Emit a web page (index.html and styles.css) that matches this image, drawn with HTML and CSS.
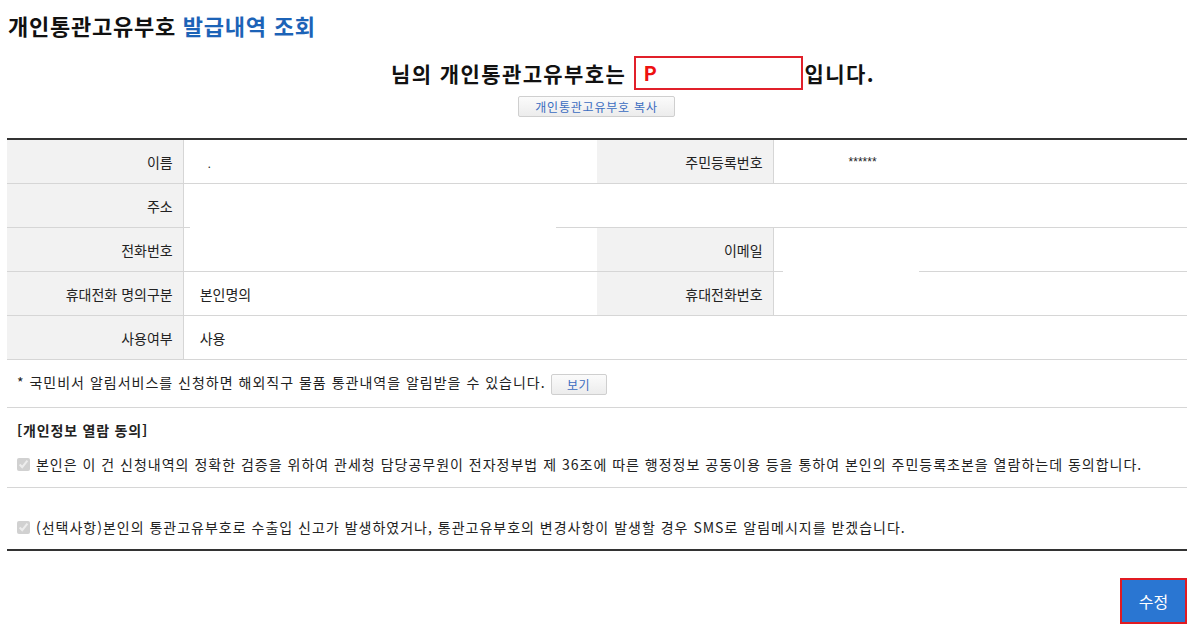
FILE: index.html
```html
<!DOCTYPE html>
<html lang="ko">
<head>
    <meta charset="UTF-8">
    <meta name="viewport" content="width=device-width, initial-scale=1.0">
    <title>개인통관고유부호 발급내역 조회</title>
    <link rel="stylesheet" href="styles.css">
</head>
<body>
    <div class="container">
        <h1 class="title">개인통관고유부호 <span class="blue">발급내역 조회</span></h1>

        <div class="result">
            <p class="result-line"><span class="user-name"></span>님의 개인통관고유부호는 <span class="code-box">P</span>입니다.</p>
            <button class="btn-copy">개인통관고유부호 복사</button>
        </div>

        <table class="info-table">
            <tr>
                <th>이름</th>
                <td><span class="dot">.</span></td>
                <th>주민등록번호</th>
                <td><span class="masked">******</span></td>
            </tr>
            <tr>
                <th>주소</th>
                <td colspan="3" class="has-mask"><span class="mask mask-addr"></span></td>
            </tr>
            <tr>
                <th>전화번호</th>
                <td></td>
                <th>이메일</th>
                <td class="has-mask"><span class="mask mask-mail"></span></td>
            </tr>
            <tr>
                <th>휴대전화 명의구분</th>
                <td>본인명의</td>
                <th>휴대전화번호</th>
                <td></td>
            </tr>
            <tr>
                <th>사용여부</th>
                <td colspan="3">사용</td>
            </tr>
        </table>

        <div class="agree-box">
            <div class="notice">
                * 국민비서 알림서비스를 신청하면 해외직구 물품 통관내역을 알림받을 수 있습니다.
                <button class="btn-view">보기</button>
            </div>
            <div class="agree-section">
                <h3>[개인정보 열람 동의]</h3>
                <label class="check-row">
                    <input type="checkbox" checked disabled>
                    본인은 이 건 신청내역의 정확한 검증을 위하여 관세청 담당공무원이 전자정부법 제 36조에 따른 행정정보 공동이용 등을 통하여 본인의 주민등록초본을 열람하는데 동의합니다.
                </label>
            </div>
            <div class="agree-section optional">
                <label class="check-row">
                    <input type="checkbox" checked disabled>
                    (선택사항)본인의 통관고유부호로 수출입 신고가 발생하였거나, 통관고유부호의 변경사항이 발생할 경우 SMS로 알림메시지를 받겠습니다.
                </label>
            </div>
        </div>

        <div class="actions">
            <button class="btn-edit">수정</button>
        </div>
    </div>
</body>
</html>
```

FILE: styles.css
```css
body {
    font-family: "Noto Sans CJK KR", "Noto Sans", sans-serif;
    font-size: 14px;
    color: #222;
    background-color: #fff;
    margin: 0;
}

.container {
    width: 1180px;
    margin-left: 7px;
}

.title {
    font-size: 22px;
    font-weight: bold;
    color: #111;
    margin: 0;
    padding: 9px 0 0 1px;
    height: 40px;
    line-height: 32px;
    letter-spacing: 0.75px;
}

.title .blue {
    color: #1c63b7;
}

.result {
    text-align: center;
}

.result-line {
    margin: 0;
    padding-top: 7px;
    font-size: 21px;
    font-weight: bold;
    color: #111;
    line-height: 34px;
    letter-spacing: 1.4px;
}

/* 이름은 가려져 있음 */
.user-name {
    display: inline-block;
    width: 72px;
}

.code-box {
    display: inline-block;
    width: 157px;
    height: 30px;
    line-height: 30px;
    border: 2px solid #e1202a;
    padding-left: 8px;
    margin-right: 2px;
    text-align: left;
    color: #ee1111;
    font-size: 20px;
    letter-spacing: 0;
    vertical-align: top;
}

.btn-copy {
    display: block;
    margin: 6px auto 0 511px;
    width: 157px;
    height: 21px;
    padding: 0;
    font-family: inherit;
    font-size: 12px;
    letter-spacing: 0.8px;
    color: #3a6cc0;
    background: linear-gradient(#fbfbfb, #ececec);
    border: 1px solid #cfcfcf;
    border-radius: 2px;
    line-height: 18px;
}

.info-table {
    width: 100%;
    margin-top: 21px;
    border-collapse: collapse;
    border-top: 2px solid #333;
}

.info-table th,
.info-table td {
    height: 43px;
    padding: 0;
    border-bottom: 1px solid #d6d6d6;
    font-weight: normal;
}

.info-table th {
    width: 166px;
    padding-right: 10px;
    background-color: #f2f2f2;
    text-align: right;
    border-right: 1px solid #d6d6d6;
}

.info-table td {
    width: 398px;
    padding-left: 16px;
    text-align: left;
}

.info-table .has-mask {
    position: relative;
}

/* 개인정보 가림 처리 */
.mask {
    position: absolute;
    bottom: -1px;
    height: 2px;
    background-color: #fff;
}

.mask-addr {
    left: 6px;
    width: 366px;
}

.mask-mail {
    left: 9px;
    width: 136px;
}

.info-table .dot {
    margin-left: 8px;
    font-size: 11px;
}

.info-table .masked {
    margin-left: 59px;
    font-family: "Liberation Sans", sans-serif;
    font-size: 12px;
    letter-spacing: 0;
    vertical-align: 2px;
}

.agree-box {
    border-bottom: 2px solid #333;
}

.notice {
    padding: 12px 10px 12px 10px;
    border-bottom: 1px solid #d6d6d6;
    letter-spacing: 1px;
}

.btn-view {
    width: 56px;
    height: 21px;
    margin-left: 0;
    padding: 0;
    font-family: inherit;
    font-size: 12px;
    letter-spacing: 0.5px;
    color: #3a6cc0;
    background: linear-gradient(#fbfbfb, #ececec);
    border: 1px solid #cfcfcf;
    border-radius: 2px;
    vertical-align: middle;
}

.agree-section {
    padding: 12px 10px 13px 10px;
    letter-spacing: 1px;
}

.agree-section h3 {
    margin: 0 0 14px 0;
    font-size: 14px;
    font-weight: bold;
    color: #222;
    letter-spacing: 0.8px;
}

.agree-section.optional {
    border-top: 1px solid #d6d6d6;
    padding-top: 29px;
    padding-bottom: 12px;
}

.check-row {
    display: block;
}

.check-row input {
    width: 13px;
    height: 13px;
    margin: 0 1px 0 0;
    vertical-align: -1px;
}

.actions {
    text-align: right;
    padding-top: 27px;
}

.btn-edit {
    width: 67px;
    height: 46px;
    font-family: inherit;
    font-size: 16px;
    color: #fff;
    background-color: #2a76d2;
    border: 2px solid #e11b22;
    padding: 0;
}
```
